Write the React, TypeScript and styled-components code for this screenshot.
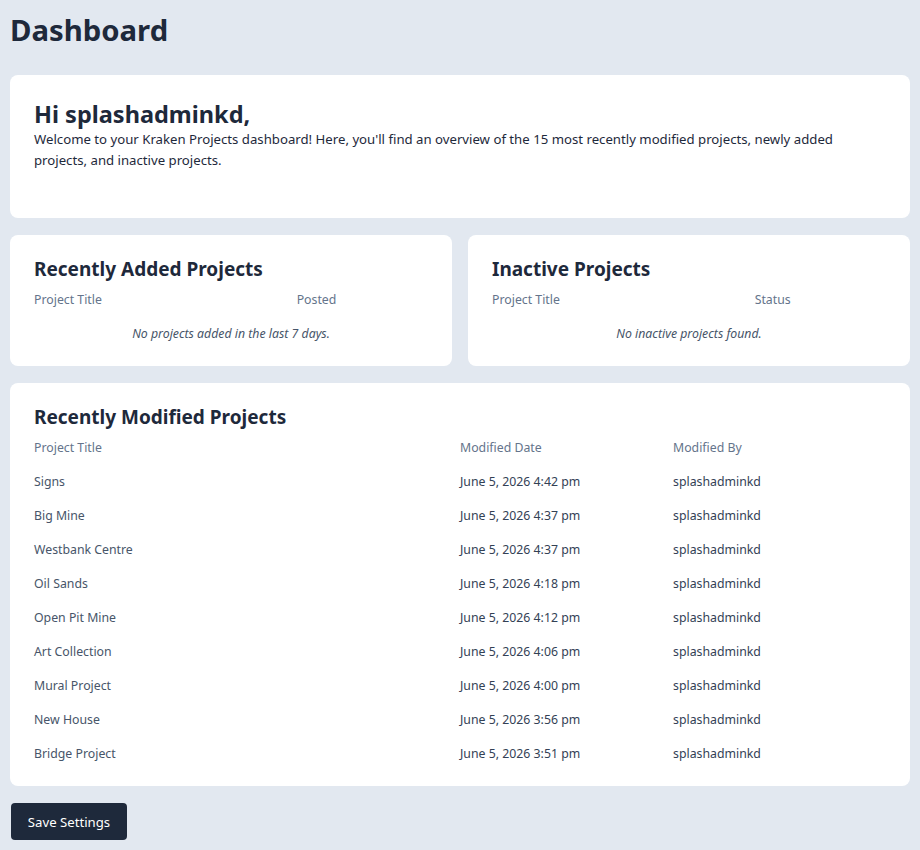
import React from 'react';
import styled, { createGlobalStyle } from 'styled-components';

const GlobalStyle = createGlobalStyle`
  html, body {
    margin: 0;
    padding: 0;
    background: #e2e8f0;
  }
  body {
    font-family: 'Segoe UI', 'Noto Sans', 'Open Sans', sans-serif;
    color: #1e293b;
  }
  * {
    box-sizing: border-box;
  }
`;

const Page = styled.main`
  padding: 10px;
  display: flex;
  flex-direction: column;
`;

const Title = styled.h1`
  margin: 0 0 25px;
  font-size: 29.3px;
  line-height: 40px;
  font-weight: 700;
  color: #1e293b;
`;

const Stack = styled.div`
  display: flex;
  flex-direction: column;
  gap: 17px;
`;

const Row = styled.div`
  display: grid;
  grid-template-columns: 1fr 1fr;
  gap: 16px;
`;

const Card = styled.section`
  background: #ffffff;
  border-radius: 8px;
  padding: 24px 24px 16px;
`;

const WelcomeCard = styled(Card)`
  padding-bottom: 24px;
`;

const Greeting = styled.h2`
  margin: 0;
  font-size: 23.5px;
  line-height: 30px;
  font-weight: 700;
  color: #1e293b;
`;

const Intro = styled.p`
  margin: 0 0 23px;
  font-size: 13.2px;
  line-height: 21px;
  color: #1e293b;
`;

const CardTitle = styled.h3`
  margin: 0 0 3px;
  font-size: 19px;
  line-height: 20px;
  font-weight: 700;
  color: #1e293b;
`;

const Table = styled.div<{ cols: string }>`
  display: grid;
  grid-template-columns: ${(p) => p.cols};
  font-size: 12.3px;
`;

const Cell = styled.div<{ head?: boolean; tone?: 'title' | 'meta' }>`
  height: 34px;
  display: flex;
  align-items: center;
  color: ${(p) => (p.head ? '#64748b' : p.tone === 'meta' ? '#334155' : '#475569')};
`;

const Empty = styled.div`
  grid-column: 1 / -1;
  height: 34px;
  display: flex;
  align-items: center;
  justify-content: center;
  font-style: italic;
  color: #475569;
`;

const SaveButton = styled.button`
  align-self: flex-start;
  margin: 17px 0 0 1px;
  height: 37px;
  width: 116px;
  padding: 0;
  border: none;
  border-radius: 4px;
  background: #1e293b;
  color: #ffffff;
  font-family: inherit;
  font-size: 13.2px;
  cursor: pointer;
`;

const modified = [
  { title: 'Signs', date: 'June 5, 2026 4:42 pm' },
  { title: 'Big Mine', date: 'June 5, 2026 4:37 pm' },
  { title: 'Westbank Centre', date: 'June 5, 2026 4:37 pm' },
  { title: 'Oil Sands', date: 'June 5, 2026 4:18 pm' },
  { title: 'Open Pit Mine', date: 'June 5, 2026 4:12 pm' },
  { title: 'Art Collection', date: 'June 5, 2026 4:06 pm' },
  { title: 'Mural Project', date: 'June 5, 2026 4:00 pm' },
  { title: 'New House', date: 'June 5, 2026 3:56 pm' },
  { title: 'Bridge Project', date: 'June 5, 2026 3:51 pm' },
];

const App = () => {
  return (
    <>
      <GlobalStyle />
      <Page>
        <Title>Dashboard</Title>
        <Stack>
          <WelcomeCard>
            <Greeting>Hi splashadminkd,</Greeting>
            <Intro>
              Welcome to your Kraken Projects dashboard! Here, you'll find an overview of the 15 most
              recently modified projects, newly added projects, and inactive projects.
            </Intro>
          </WelcomeCard>

          <Row>
            <Card>
              <CardTitle>Recently Added Projects</CardTitle>
              <Table cols="2fr 1fr">
                <Cell head>Project Title</Cell>
                <Cell head>Posted</Cell>
                <Empty>No projects added in the last 7 days.</Empty>
              </Table>
            </Card>
            <Card>
              <CardTitle>Inactive Projects</CardTitle>
              <Table cols="2fr 1fr">
                <Cell head>Project Title</Cell>
                <Cell head>Status</Cell>
                <Empty>No inactive projects found.</Empty>
              </Table>
            </Card>
          </Row>

          <Card>
            <CardTitle>Recently Modified Projects</CardTitle>
            <Table cols="2fr 1fr 1fr">
              <Cell head>Project Title</Cell>
              <Cell head>Modified Date</Cell>
              <Cell head>Modified By</Cell>
              {modified.map((m) => (
                <React.Fragment key={m.title}>
                  <Cell>{m.title}</Cell>
                  <Cell tone="meta">{m.date}</Cell>
                  <Cell tone="meta">splashadminkd</Cell>
                </React.Fragment>
              ))}
            </Table>
          </Card>
        </Stack>
        <SaveButton>Save Settings</SaveButton>
      </Page>
    </>
  );
};

export default App;
